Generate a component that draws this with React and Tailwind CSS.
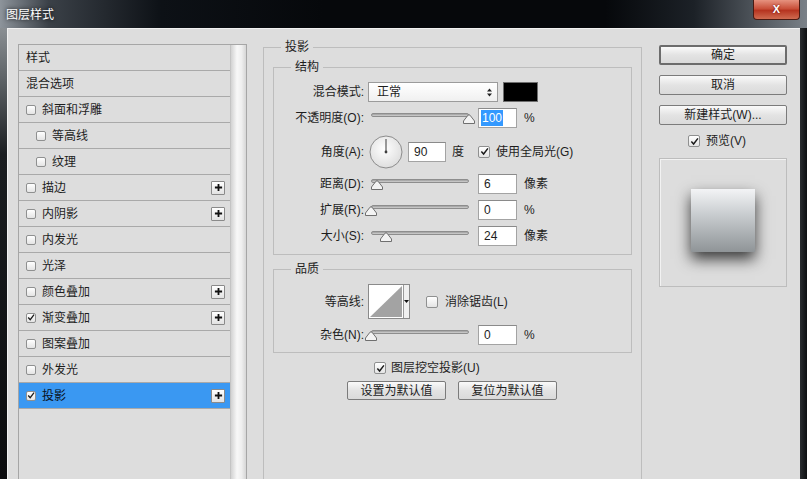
import React from 'react';

function Check({ checked, small }) {
  const size = small ? 'w-[10px] h-[10px]' : 'w-[12px] h-[12px]';
  return (
    <span
      className={`${size} shrink-0 inline-flex items-center justify-center border border-[#8f9090] rounded-[2px] bg-[linear-gradient(180deg,#ffffff,#e4e4e4)]`}
    >
      {checked && (
        <svg viewBox="0 0 10 10" className="w-[9px] h-[9px]">
          <path d="M1.5 5 L4 7.8 L8.8 1.5" fill="none" stroke="#1b1b1b" strokeWidth="1.6" />
        </svg>
      )}
    </span>
  );
}

function Plus() {
  return (
    <span className="ml-auto mr-[5px] w-[14px] h-[14px] border border-[#8a8a8a] rounded-[1px] bg-[linear-gradient(180deg,#ffffff,#e2e2e2)] flex items-center justify-center">
      <svg viewBox="0 0 10 10" className="w-[9px] h-[9px]">
        <path d="M5 1 V9 M1 5 H9" stroke="#111" strokeWidth="2" />
      </svg>
    </span>
  );
}

function ListRow({ label, box, checked, indent, plus, selected }) {
  return (
    <div
      className={`h-[26px] shrink-0 flex items-center border-b border-[#a9a9a9] ${
        selected ? 'bg-[#3a98f2] text-[#0a1020]' : ''
      } ${indent ? 'pl-[17px]' : 'pl-[7px]'}`}
    >
      {box && <Check checked={checked} small />}
      <span className={box ? 'ml-[6px]' : ''}>{label}</span>
      {plus && <Plus />}
    </div>
  );
}

function Slider({ pos }) {
  return (
    <div className="relative w-[98px] h-[20px] shrink-0">
      <div className="absolute left-0 right-0 top-[5px] h-[4px] rounded-full border border-[#8d8d8d] bg-[linear-gradient(180deg,#9c9c9c,#d2d2d2)]" />
      <svg
        viewBox="0 0 12 10"
        className="absolute top-[6px] w-[12px] h-[10px]"
        style={{ left: pos - 6 }}
      >
        <path d="M0.5 9.5 V7 L5 1.2 Q6 0.2 7 1.2 L11.5 7 V9.5 Z" fill="#f3f3f3" stroke="#6f6f6f" />
      </svg>
    </div>
  );
}

function Field({ value, selected, w = 'w-[39px]' }) {
  return (
    <div className={`${w} h-[20px] shrink-0 border border-[#a3a3a3] border-t-[#8a8a8a] bg-white flex items-center pl-[2px]`}>
      <span className={selected ? 'bg-[#3399ff] text-white px-[1px]' : 'px-[3px]'}>{value}</span>
    </div>
  );
}

function Btn({ children, primary, className = '' }) {
  return (
    <div
      className={`flex items-center justify-center rounded-[2px] bg-[linear-gradient(180deg,#fafafa,#e3e3e3_50%,#dadada)] ${
        primary ? 'border-2 border-[#6c6c6c]' : 'border border-[#7b7b7b]'
      } ${className}`}
    >
      {children}
    </div>
  );
}

function Label({ children }) {
  return <span className="w-[91px] shrink-0 text-right pr-[1px]">{children}</span>;
}

function Dial() {
  return (
    <svg viewBox="0 0 34 34" className="w-[34px] h-[34px] shrink-0">
      <defs>
        <radialGradient id="dg" cx="45%" cy="40%" r="60%">
          <stop offset="0%" stopColor="#ffffff" />
          <stop offset="100%" stopColor="#dedede" />
        </radialGradient>
      </defs>
      <circle cx="17" cy="17" r="16" fill="url(#dg)" stroke="#8c8c8c" />
      <line x1="17" y1="17" x2="17" y2="4" stroke="#5a5a5a" strokeWidth="1.2" />
      <circle cx="17" cy="17" r="1.4" fill="#3d3d3d" />
    </svg>
  );
}

function Contour() {
  return (
    <div className="flex h-[35px] shrink-0 border border-[#8a8a8a] bg-white">
      <svg viewBox="0 0 34 33" className="w-[34px] h-[33px]">
        <path d="M1 32 L33 1 V32 Z" fill="#a3a3a3" />
      </svg>
      <div className="w-[6px] border-l border-[#9a9a9a] bg-[#f0f0f0] flex items-center justify-center">
        <svg viewBox="0 0 5 3" className="w-[5px] h-[3px]">
          <path d="M0 0 H5 L2.5 3 Z" fill="#111" />
        </svg>
      </div>
    </div>
  );
}

export default function App() {
  const rows = [
    { label: '样式' },
    { label: '混合选项' },
    { label: '斜面和浮雕', box: true },
    { label: '等高线', box: true, indent: true },
    { label: '纹理', box: true, indent: true },
    { label: '描边', box: true, plus: true },
    { label: '内阴影', box: true, plus: true },
    { label: '内发光', box: true },
    { label: '光泽', box: true },
    { label: '颜色叠加', box: true, plus: true },
    { label: '渐变叠加', box: true, checked: true, plus: true },
    { label: '图案叠加', box: true },
    { label: '外发光', box: true },
    { label: '投影', box: true, checked: true, plus: true, selected: true },
  ];

  return (
    <div className="w-[807px] h-[479px] overflow-hidden flex flex-col bg-[#0b0d10] font-['Liberation_Sans','Noto_Sans_CJK_SC',sans-serif] text-[12px] leading-[16px] text-[#1d1d1d]">
      {/* title bar */}
      <div className="h-[28px] shrink-0 flex items-start bg-[linear-gradient(90deg,#8d949b_0%,#3b4148_6%,#0d1116_20%,#06080b_40%,#06080b_75%,#1c2127_86%,#7a8188_100%)]">
        <span className="ml-[6px] mt-[7px] text-white text-[12px] [text-shadow:0_0_4px_#000]">图层样式</span>
        <div className="ml-auto mr-[7px] w-[47px] h-[20px] rounded-b-[4px] border border-[#4a1a12] border-t-0 bg-[linear-gradient(180deg,#e6927f,#c9503a_45%,#b63420_55%,#cf6b50)] flex items-center justify-center">
          <span className="text-white font-bold text-[11px] leading-none [text-shadow:0_0_2px_#600]">X</span>
        </div>
      </div>

      <div className="flex flex-1 min-h-0">
        <div className="w-[7px] shrink-0 bg-[linear-gradient(180deg,#8a8f93_0%,#5b6064_12%,#1a1d20_28%,#0b0c0e_100%)]" />

        <div className="flex-1 min-w-0 overflow-hidden bg-[#dddddd] border-t border-l border-[#f1f1f1] flex items-start pt-[10px] pl-[10px]">
          {/* style list */}
          <div className="mt-[5px] w-[229px] h-[460px] shrink-0 border border-[#a6a6a6] flex">
            <div className="w-[211px] flex flex-col">
              {rows.map((r) => (
                <ListRow key={r.label} {...r} />
              ))}
            </div>
            <div className="flex-1 border-l border-[#c4c4c4] bg-[linear-gradient(90deg,#d2d2d2,#f8f8f8_40%,#efefef_70%,#d6d6d6)]" />
          </div>

          {/* drop shadow settings */}
          <fieldset className="ml-[16px] w-[379px] h-[460px] shrink-0 border border-[#bdbdbd] px-[9px]">
            <legend className="ml-[8px] px-[4px] leading-[16px]">投影</legend>

            <fieldset className="mt-[4px] border border-[#bdbdbd] px-0">
              <legend className="ml-[17px] px-[4px] leading-[16px]">结构</legend>
              <div className="pt-[7px] pb-[8px] flex flex-col">
                <div className="flex items-center h-[20px]">
                  <Label>混合模式:</Label>
                  <div className="ml-[3px] w-[130px] h-[20px] border border-[#9b9b9b] bg-[linear-gradient(180deg,#ffffff,#f0f0f0)] flex items-center pl-[8px] pr-[5px]">
                    <span>正常</span>
                    <svg viewBox="0 0 5 9" className="ml-auto w-[5px] h-[9px]">
                      <path d="M0 3.5 L2.5 0.5 L5 3.5 Z M0 5.5 L2.5 8.5 L5 5.5 Z" fill="#222" />
                    </svg>
                  </div>
                  <div className="ml-[5px] w-[35px] h-[20px] bg-black border border-[#6f6f6f]" />
                </div>

                <div className="flex items-center h-[20px] mt-[6px]">
                  <Label>不透明度(O):</Label>
                  <div className="ml-[6px]"><Slider pos={98} /></div>
                  <div className="ml-[9px]"><Field value="100" selected /></div>
                  <span className="ml-[7px]">%</span>
                </div>

                <div className="flex items-center h-[33px] mt-[7px]">
                  <Label>角度(A):</Label>
                  <div className="ml-[4px]"><Dial /></div>
                  <div className="ml-[5px]"><Field value="90" w="w-[38px]" /></div>
                  <span className="ml-[6px]">度</span>
                  <div className="ml-[14px] flex items-center">
                    <Check checked />
                    <span className="ml-[6px]">使用全局光(G)</span>
                  </div>
                </div>

                <div className="flex items-center h-[20px] mt-[6px]">
                  <Label>距离(D):</Label>
                  <div className="ml-[6px]"><Slider pos={6} /></div>
                  <div className="ml-[9px]"><Field value="6" /></div>
                  <span className="ml-[7px]">像素</span>
                </div>

                <div className="flex items-center h-[20px] mt-[6px]">
                  <Label>扩展(R):</Label>
                  <div className="ml-[6px]"><Slider pos={0} /></div>
                  <div className="ml-[9px]"><Field value="0" /></div>
                  <span className="ml-[7px]">%</span>
                </div>

                <div className="flex items-center h-[20px] mt-[6px]">
                  <Label>大小(S):</Label>
                  <div className="ml-[6px]"><Slider pos={15} /></div>
                  <div className="ml-[9px]"><Field value="24" /></div>
                  <span className="ml-[7px]">像素</span>
                </div>
              </div>
            </fieldset>

            <fieldset className="mt-[6px] border border-[#bdbdbd] px-0">
              <legend className="ml-[17px] px-[4px] leading-[16px]">品质</legend>
              <div className="pt-[7px] pb-[7px] flex flex-col">
                <div className="flex items-center h-[35px]">
                  <Label>等高线:</Label>
                  <div className="ml-[3px]"><Contour /></div>
                  <div className="ml-[16px] flex items-center">
                    <Check />
                    <span className="ml-[7px]">消除锯齿(L)</span>
                  </div>
                </div>
                <div className="flex items-center h-[20px] mt-[6px]">
                  <Label>杂色(N):</Label>
                  <div className="ml-[6px]"><Slider pos={0} /></div>
                  <div className="ml-[9px]"><Field value="0" /></div>
                  <span className="ml-[7px]">%</span>
                </div>
              </div>
            </fieldset>

            <div className="mt-[7px] h-[16px] flex items-center pl-[101px]">
              <Check checked />
              <span className="ml-[5px]">图层挖空投影(U)</span>
            </div>

            <div className="mt-[5px] flex pl-[74px] gap-[12px]">
              <Btn className="w-[99px] h-[19px]">设置为默认值</Btn>
              <Btn className="w-[99px] h-[19px]">复位为默认值</Btn>
            </div>
          </fieldset>

          {/* buttons + preview */}
          <div className="ml-[17px] w-[128px] shrink-0 pt-[6px] flex flex-col">
            <Btn primary className="h-[20px]">确定</Btn>
            <Btn className="h-[20px] mt-[10px]">取消</Btn>
            <Btn className="h-[20px] mt-[10px]">新建样式(W)...</Btn>
            <div className="mt-[9px] h-[14px] flex items-center pl-[29px]">
              <Check checked />
              <span className="ml-[6px]">预览(V)</span>
            </div>
            <div className="mt-[10px] h-[129px] border border-[#bdbdbd] shadow-[inset_1px_1px_0_#f2f2f2] flex items-center justify-center pb-[4px]">
              <div className="w-[64px] h-[63px] bg-[linear-gradient(180deg,#f3f4f6,#c9cdd0_40%,#8f9497)] shadow-[0_7px_14px_rgba(0,0,0,0.75)]" />
            </div>
          </div>
        </div>

        <div className="w-[7px] shrink-0 bg-[linear-gradient(90deg,#2a2d30,#0d0f11)]" />
      </div>
    </div>
  );
}
